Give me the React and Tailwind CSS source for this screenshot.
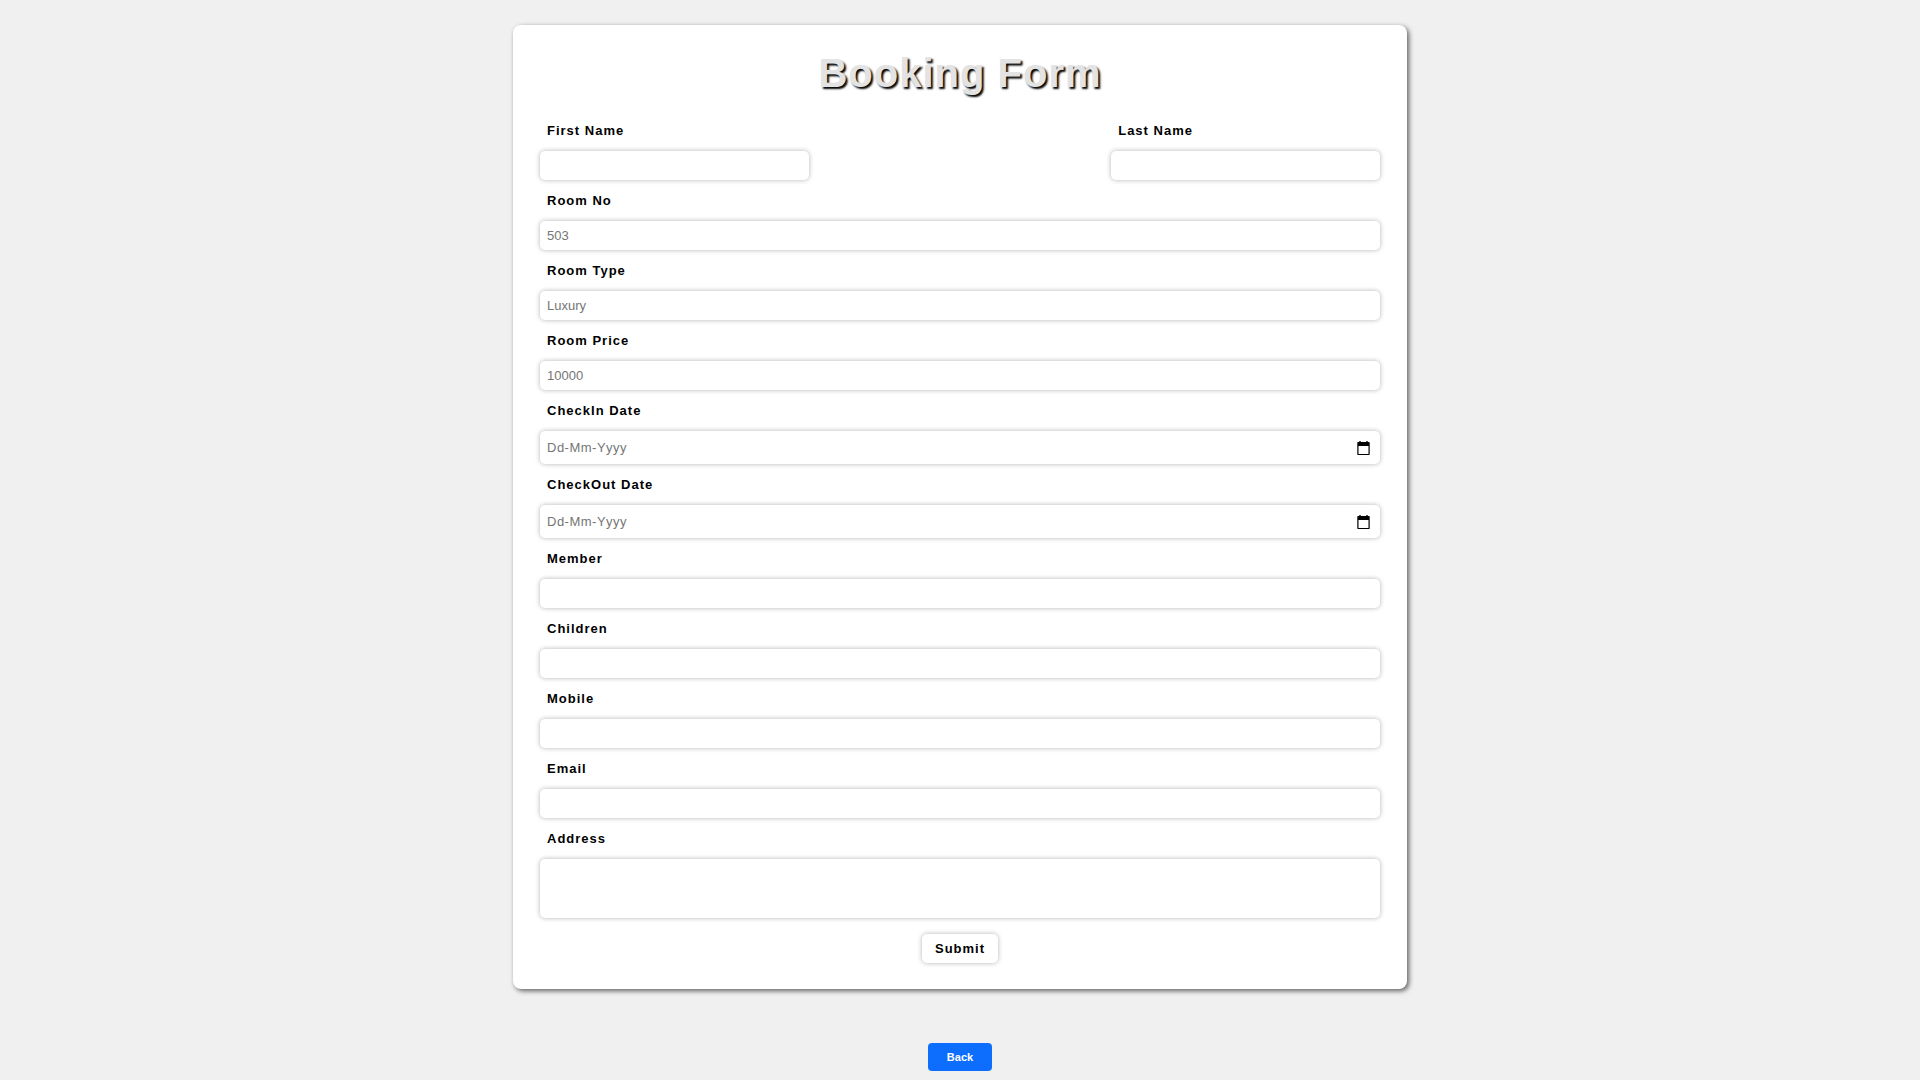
import React from "react";

const boxClass =
  "block w-full rounded-[5px] border-0 bg-white px-[7px] text-[13px] text-black placeholder:text-[#757575] shadow-[0_0_5px_rgba(0,0,0,0.3)] outline-none focus:shadow-[0_0_5px_#0d6efd]";

function Label({ id, children }) {
  return (
    <label
      htmlFor={id}
      className="block h-[41px] px-[7px] text-[13px] leading-[42px] font-bold tracking-[1px] text-black"
    >
      {children}
    </label>
  );
}

function TextField({ id, label, type = "text", placeholder, className = "" }) {
  return (
    <div className={className}>
      <Label id={id}>{label}</Label>
      <input id={id} name={id} type={type} placeholder={placeholder} className={boxClass + " h-[29px]"} />
    </div>
  );
}

function CalendarIcon() {
  return (
    <svg viewBox="0 0 13 14" className="h-[14px] w-[13px]" aria-hidden="true">
      <path d="M2 0h2v1H2zM9 0h2v1H9z" fill="#555" />
      <path
        fillRule="evenodd"
        fill="#000"
        d="M1 1h11a.7.7 0 0 1 .7.700v11.600a.7.7 0 0 1-.7.700H1a.7.7 0 0 1-.700-.700V1.700A.7.7 0 0 1 1 1zM1.500 5v8h10V5z"
      />
    </svg>
  );
}

function DateField({ id, label }) {
  return (
    <div>
      <Label id={id}>{label}</Label>
      <div className="flex h-[33px] items-center rounded-[5px] bg-white pr-[10px] shadow-[0_0_5px_rgba(0,0,0,0.3)]">
        <input
          id={id}
          name={id}
          type="text"
          placeholder="Dd-Mm-Yyyy"
          className="h-full min-w-0 flex-1 bg-transparent px-[7px] text-[13px] tracking-[0.5px] text-black outline-none placeholder:text-[#757575]"
        />
        <button type="button" aria-label={"Choose " + label} className="text-black">
          <CalendarIcon />
        </button>
      </div>
    </div>
  );
}

export default function App() {
  return (
    <div className="flex min-h-screen flex-col items-center bg-[#f0f0f0] px-4 pt-[25px] pb-[9px] font-['Liberation_Sans',Arial,sans-serif]">
      <form
        onSubmit={(e) => e.preventDefault()}
        className="w-full max-w-[894px] rounded-[8px] bg-white px-[27px] pt-[18px] pb-[26px] shadow-[2px_2px_5px_rgba(0,0,0,0.6)]"
      >
        <h1 className="h-[67px] text-center text-[40px] leading-[60px] font-bold tracking-[1px] text-[#e3e3e3] [text-shadow:2px_2px_2px_#000]">
          Booking Form
        </h1>
        <div className="flex justify-between">
          <TextField id="firstName" label="First Name" className="w-[32%]" />
          <TextField id="lastName" label="Last Name" className="w-[32%]" />
        </div>
        <TextField id="roomNo" label="Room No" placeholder="503" />
        <TextField id="roomType" label="Room Type" placeholder="Luxury" />
        <TextField id="roomPrice" label="Room Price" placeholder="10000" />
        <DateField id="checkIn" label="CheckIn Date" />
        <DateField id="checkOut" label="CheckOut Date" />
        <TextField id="member" label="Member" />
        <TextField id="children" label="Children" />
        <TextField id="mobile" label="Mobile" type="tel" />
        <TextField id="email" label="Email" type="email" />
        <div>
          <Label id="address">Address</Label>
          <textarea id="address" name="address" className={boxClass + " h-[59px] resize-none py-[6px]"} />
        </div>
        <div className="flex justify-center pt-4">
          <button
            type="submit"
            className="h-[29px] rounded-[5px] bg-white px-[13px] text-[13px] font-bold tracking-[1px] text-black shadow-[0_0_5px_rgba(0,0,0,0.3)]"
          >
            Submit
          </button>
        </div>
      </form>
      <a
        href="#"
        className="mt-[54px] flex h-7 items-center rounded-[4px] bg-[#0d6efd] px-[19px] text-[11px] font-bold text-white"
      >
        Back
      </a>
    </div>
  );
}
